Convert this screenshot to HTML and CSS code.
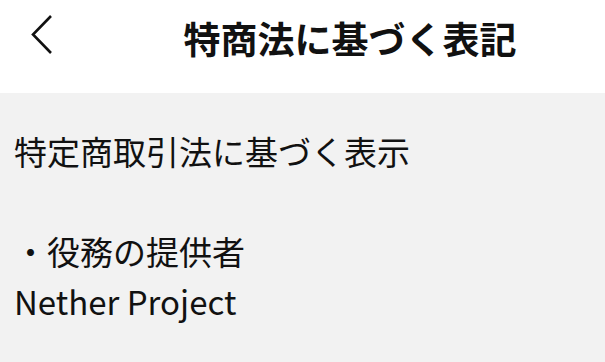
FILE: index.html
```html
<!DOCTYPE html>
<html lang="ja">
<head>
    <meta charset="UTF-8">
    <meta name="viewport" content="width=device-width, initial-scale=1.0">
    <title>特商法に基づく表記</title>
    <link rel="stylesheet" href="styles.css">
</head>
<body>
    <div class="header">
        <div class="back">
            <svg width="22" height="40" viewBox="0 0 22 40">
                <polyline points="20,1 2,19.5 20,38" fill="none" stroke="#111" stroke-width="2.6"/>
            </svg>
        </div>
        <h1 class="title">特商法に基づく表記</h1>
    </div>
    <div class="content">
        <p>特定商取引法に基づく表示</p>
        <p>&nbsp;</p>
        <p>・役務の提供者</p>
        <p>Nether Project</p>
    </div>
</body>
</html>
```

FILE: styles.css
```css
* {
    margin: 0;
    padding: 0;
}

body {
    font-family: "Noto Sans CJK JP", "Noto Sans", sans-serif;
    color: #111;
    background-color: #f2f2f2;
}

.header {
    display: flex;
    align-items: center;
    height: 93px;
    background-color: #fff;
}

.back {
    width: 95px;
    height: 93px;
    padding: 15px 0 0 31px;
    box-sizing: border-box;
}

.title {
    flex: 1;
    text-align: center;
    font-size: 37px;
    font-weight: bold;
    margin-top: -18px;
}

.content {
    padding: 33px 14px 0;
    font-size: 33px;
    line-height: 50px;
}
```
